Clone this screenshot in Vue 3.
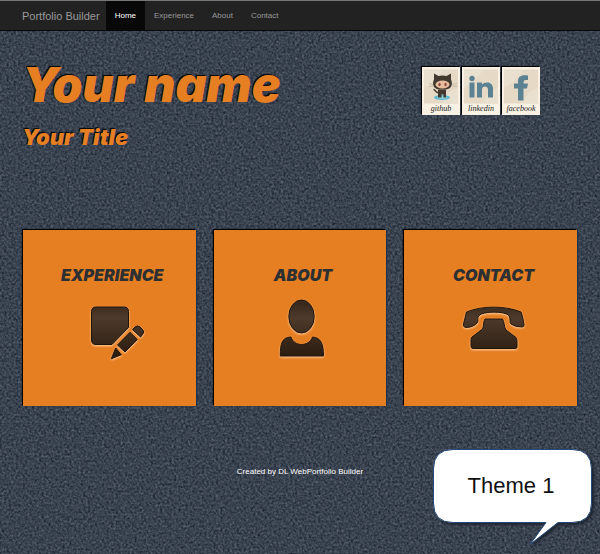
<script setup>
const links = [
  { label: 'Home', active: true },
  { label: 'Experience', active: false },
  { label: 'About', active: false },
  { label: 'Contact', active: false }
]

const socials = ['github', 'linkedin', 'facebook']
const cards = ['Experience', 'About', 'Contact']
</script>

<template>
  <div class="page">
    <svg class="texture" aria-hidden="true">
      <filter id="asphalt" x="0" y="0" width="100%" height="100%" color-interpolation-filters="sRGB">
        <feTurbulence type="fractalNoise" baseFrequency="0.43" numOctaves="2" seed="8" />
        <feColorMatrix
          values="0.26 0.2 0 0 -0.005
                  0.26 0.2 0 0 0.03
                  0.26 0.2 0 0 0.08
                  0 0 0 0 1"
        />
      </filter>
      <rect width="100%" height="100%" filter="url(#asphalt)" />
    </svg>

    <nav class="navbar">
      <a class="brand" href="#">Portfolio Builder</a>
      <a
        v-for="link in links"
        :key="link.label"
        class="nav-link"
        :class="{ active: link.active }"
        :href="'#' + link.label.toLowerCase()"
      >{{ link.label }}</a>
    </nav>

    <header class="hero">
      <div>
        <h1>Your name</h1>
        <h2>Your Title</h2>
      </div>
      <div class="socials">
        <a v-for="name in socials" :key="name" class="polaroid" :href="'#' + name">
          <svg class="photo" viewBox="0 0 34 34" aria-hidden="true">
            <rect width="34" height="34" fill="#e6dac7" />
            <path d="M0 0H20L8 14L0 18Z" fill="#eae0d0" />
            <path d="M34 18L24 24L18 34H34Z" fill="#eae0cf" />
            <g v-if="name === 'github'">
              <ellipse cx="18" cy="28" rx="8" ry="2.500" fill="#5bb9cf" />
              <ellipse cx="18" cy="28" rx="5" ry="1.300" fill="#8fd2de" />
              <path d="M14 27V20H22V28H19.500V25H17.500V28H14Z" fill="#42392f" />
              <path d="M15 23C11 24 12 20 9.500 20" fill="none" stroke="#42392f" stroke-width="1.500" />
              <path d="M10 4L14.500 6.500C17 5.700 20 5.700 22.500 6.500L27 4V10C29 14 28 20 21 20H16C9 20 8 14 10 10Z" fill="#42392f" />
              <ellipse cx="18.500" cy="15" rx="7" ry="4" fill="#e9bd9d" />
              <ellipse cx="15.500" cy="15" rx="1.200" ry="1.700" fill="#8d4d44" />
              <ellipse cx="21.500" cy="15" rx="1.200" ry="1.700" fill="#8d4d44" />
              <path d="M5 14L9 15M5 17L9 16.500M28 15L33 14M28 16.500L33 17" stroke="#a99b88" stroke-width=".5" />
            </g>
            <g v-else-if="name === 'linkedin'" fill="#5b8293">
              <circle cx="8" cy="9" r="2.700" />
              <path d="M5.500 13H10.500V28H5.500ZM13 13H18V15C21 11.500 29 12 29 19V28H24V20C24 16 18 16 18 20V28H13Z" />
            </g>
            <path
              v-else
              d="M14 31V19H10V14H14V12C14 7 17 5 24 6V10.500C20 10 19.500 11 19.500 14H24L23 19H19.500V31Z"
              fill="#5b8293"
            />
          </svg>
          <span class="caption">{{ name }}</span>
        </a>
      </div>
    </header>

    <main class="cards">
      <a v-for="name in cards" :key="name" class="card" :href="'#' + name.toLowerCase()">
        <h3>{{ name }}</h3>
        <svg class="icon" viewBox="0 0 72 68" aria-hidden="true">
          <defs>
            <linearGradient :id="'ink-' + name" gradientUnits="userSpaceOnUse" x1="0" y1="8" x2="0" y2="62">
              <stop offset="0" stop-color="#3a2a1d" />
              <stop offset=".25" stop-color="#4d3a2b" />
              <stop offset="1" stop-color="#291b0f" />
            </linearGradient>
          </defs>
          <g :fill="'url(#ink-' + name + ')'" stroke="#20140b" stroke-width="1" stroke-linejoin="round">
            <template v-if="name === 'Experience'">
              <path d="M23 11H51Q55.500 11 55.500 15.500V31.500L39 48.500H23Q18.500 48.500 18.500 44V15.500Q18.500 11 23 11Z" />
              <path d="M59.500 33.500L62 31Q64.500 29 67 31L69.500 33.500Q72 36 69.500 38.500L67.500 41Z" />
              <path d="M57 36.300L64.300 43.500L52 56L44.500 49Z" />
              <path d="M42.700 52L48.300 58.700L38.300 62.800Z" />
            </template>
            <template v-else-if="name === 'About'">
              <ellipse cx="37.500" cy="20.500" rx="12.700" ry="16.500" />
              <path d="M16.300 60C16.300 47 18 41.500 27 41C30 51 45 51 48.500 41C57 41.500 59.500 48 59.500 60Z" />
            </template>
            <template v-else>
              <path d="M11.500 16C27 9.500 50 9.500 66 16C67.500 20 68.500 25 69 29Q69 31 67 31Q60 31 56 28C54 26 56 23 54 19.500C50 15 28 15 24 19.500C21.500 22 24 25 22 27Q18 31.500 10.500 31.500Q8 31 8.500 28Z" />
              <path d="M30 23H47.500C49.500 26 49 31 51 34L61 41.500Q62 43 62 46V51Q62 52.500 60 52.500H18Q16 52.500 16 50V43.500Q16 42 17 41L27.500 33C29 30 28 26 30 23Z" />
            </template>
          </g>
        </svg>
      </a>
    </main>

    <footer class="footer">Created by DL WebPortfolio Builder</footer>

    <aside class="callout">
      <svg class="bubble" viewBox="0 0 162 98" aria-hidden="true">
        <path
          d="M21 1.500H140Q159.500 1.500 159.500 21V55Q159.500 74.500 140 74.500H126L98 96.500L114 74.500H21Q1.500 74.500 1.500 55V21Q1.500 1.500 21 1.500Z"
          fill="#fff"
          stroke="#244a7c"
        />
      </svg>
      <span class="callout-text">Theme 1</span>
    </aside>
  </div>
</template>

<style>
body {
  margin: 0;
  background: #363f4c;
}
</style>

<style scoped>
.page {
  position: relative;
  min-height: 100vh;
  overflow: hidden;
  font-family: "Liberation Sans", Arial, sans-serif;
  isolation: isolate;
}

.texture {
  position: absolute;
  inset: 0;
  z-index: -1;
  width: 100%;
  height: 100%;
}

a {
  text-decoration: none;
}

.navbar {
  display: flex;
  height: 29px;
  padding-left: 14px;
  background: #222;
  border-top: 1px solid #777;
  border-bottom: 1px solid #080808;
}

.brand,
.nav-link {
  display: flex;
  align-items: center;
  padding: 0 9px;
  color: #999;
  font-size: 8px;
}

.brand {
  padding: 0 6px 0 8px;
  font-size: 11px;
}

.nav-link.active {
  background: #080808;
  color: #fff;
}

.hero {
  display: flex;
  justify-content: space-between;
  align-items: flex-start;
  padding: 24px 60px 0 22px;
}

h1,
h2,
h3 {
  margin: 0;
  font-family: Inter, "Open Sans", sans-serif;
  font-weight: 900;
  font-style: italic;
}

h1,
h2 {
  color: #e67e22;
  text-shadow: -1px -1px 1px #000;
}

h1 {
  font-size: 48px;
  line-height: 60px;
}

h2 {
  margin-top: 8px;
  font-size: 22px;
  line-height: 28px;
}

.socials {
  display: flex;
  gap: 2px;
  padding-top: 12px;
}

.polaroid {
  display: flex;
  flex-direction: column;
  align-items: center;
  width: 38px;
  height: 48px;
  padding-top: 2px;
  box-sizing: border-box;
  background: #f8f1e4;
  box-shadow: -1px -1px 1px #000;
}

.photo {
  width: 34px;
  height: 35px;
}

.caption {
  color: #222;
  font-family: "Liberation Serif", serif;
  font-size: 8px;
  font-style: italic;
  line-height: 10px;
}

.cards {
  display: grid;
  grid-template-columns: repeat(3, 1fr);
  gap: 18px;
  padding: 79px 23px 0;
}

.card {
  display: flex;
  flex-direction: column;
  align-items: center;
  padding: 35px 0 42px;
  background: #e67e22;
  box-shadow: -1px -1px 1px #000, 1px 0 1px #183452;
}

h3 {
  padding-left: 6px;
  color: #2c3033;
  font-size: 16px;
  line-height: 20px;
  text-transform: uppercase;
}

.icon {
  width: 72px;
  height: 68px;
  margin-top: 11px;
  filter: drop-shadow(0 1px 1px #ffd2a4);
}

.footer {
  padding: 61px 0 77px;
  color: #fff;
  font-size: 8px;
  line-height: 10px;
  text-align: center;
}

.callout {
  position: absolute;
  right: 6px;
  bottom: 8px;
  width: 162px;
}

.bubble {
  display: block;
  width: 100%;
  filter: drop-shadow(2px 2px 1px #1d2631);
}

.callout-text {
  position: absolute;
  top: 24px;
  left: 0;
  width: 158px;
  color: #111;
  font-size: 22px;
  line-height: 28px;
  text-align: center;
}
</style>
